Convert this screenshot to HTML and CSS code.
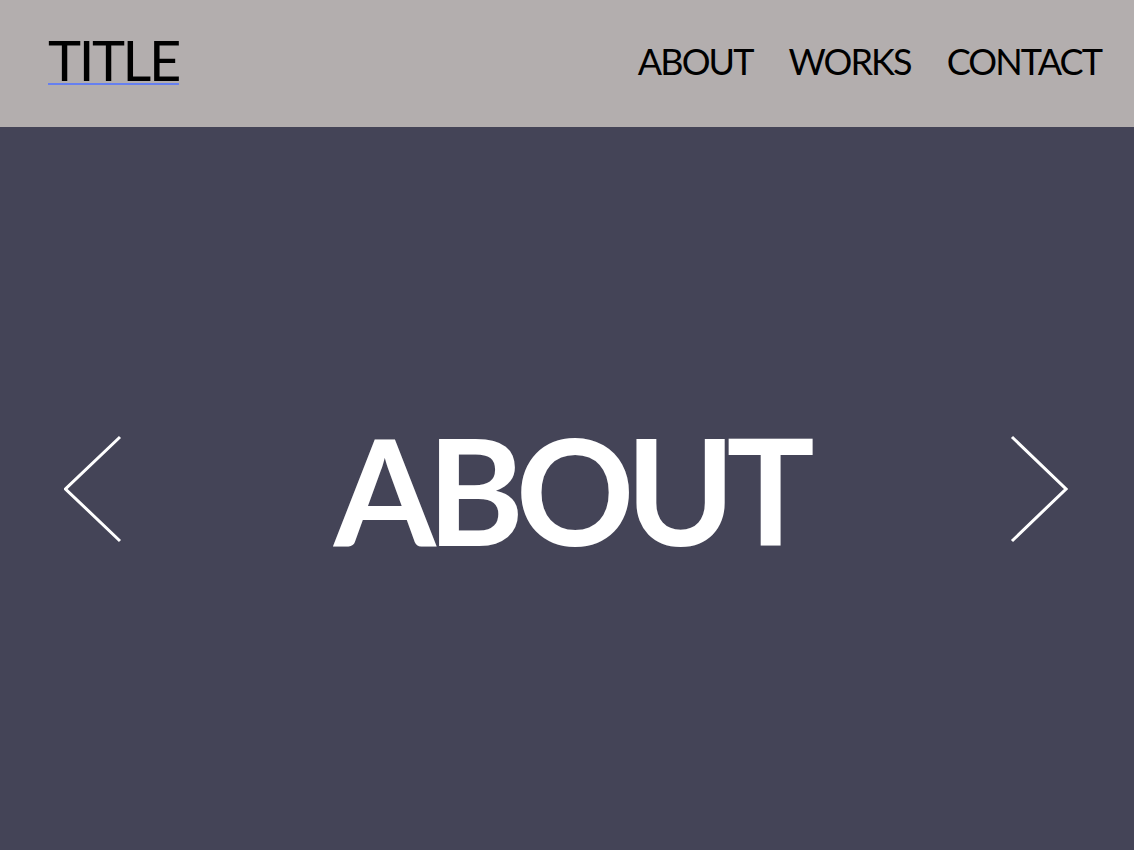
FILE: index.html
```html
<!DOCTYPE html>
<html lang="en">
<head>
<meta charset="utf-8">
<title>Title</title>
<link rel="stylesheet" href="styles.css">
</head>
<body>
<header class="site-header">
  <a class="logo" href="#">TITLE</a>
  <nav class="nav">
    <a class="nav-link" href="#">ABOUT</a>
    <a class="nav-link" href="#">WORKS</a>
    <a class="nav-link" href="#">CONTACT</a>
  </nav>
</header>
<main class="hero">
  <button class="arrow arrow-prev" aria-label="Previous">
    <svg width="60" height="108" viewBox="0 0 60 108"><polyline points="56,2 1.5,54 56,106" fill="none" stroke="#fff" stroke-width="3"/></svg>
  </button>
  <h1 class="hero-title">ABOUT</h1>
  <button class="arrow arrow-next" aria-label="Next">
    <svg width="60" height="108" viewBox="0 0 60 108"><polyline points="4,2 58,54 4,106" fill="none" stroke="#fff" stroke-width="3"/></svg>
  </button>
</main>
</body>
</html>
```
FILE: styles.css
```css
html, body {
  margin: 0;
  padding: 0;
  height: 100%;
}
body {
  font-family: "Lato", "Liberation Sans", sans-serif;
  background: #444457;
  display: flex;
  flex-direction: column;
}
.site-header {
  height: 127px;
  flex: none;
  background: #b3aeae;
  display: flex;
  align-items: center;
  justify-content: space-between;
  padding: 0 33px 0 48px;
  box-sizing: border-box;
}
.logo {
  color: #000;
  font-size: 56px;
  font-weight: 400;
  letter-spacing: -2.4px;
  line-height: 1;
  text-decoration: underline;
  text-decoration-color: #6680f0;
  text-decoration-thickness: 2px;
  text-underline-offset: 2px;
  margin-top: -8px;
}
.nav {
  display: flex;
  gap: 36px;
  margin-top: -6px;
}
.nav-link {
  color: #000;
  text-decoration: none;
  font-size: 36px;
  letter-spacing: -1.9px;
  line-height: 1;
}
.hero {
  flex: 1;
  display: flex;
  align-items: center;
  justify-content: space-between;
  padding: 0 66px 0 64px;
}
.arrow {
  background: none;
  border: 0;
  padding: 0;
  display: flex;
}
.hero-title {
  margin: 0 0 -2px;
  color: #fff;
  font-size: 147px;
  font-weight: 700;
  letter-spacing: -8.5px;
  line-height: 1;
  padding-left: 8px;
}
```
